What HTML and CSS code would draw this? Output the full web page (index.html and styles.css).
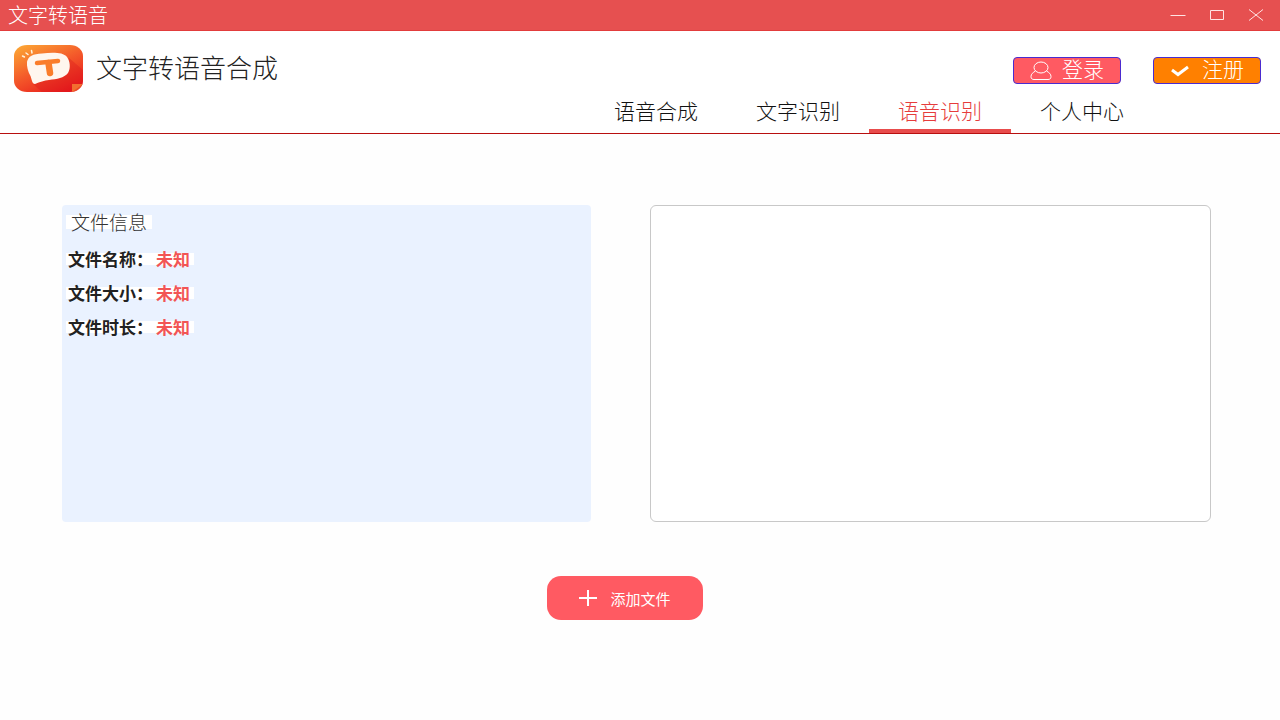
FILE: index.html
```html
<!DOCTYPE html>
<html lang="zh-CN">
<head>
    <meta charset="UTF-8">
    <meta name="viewport" content="width=device-width, initial-scale=1.0">
    <title>文字转语音</title>
    <link rel="stylesheet" href="styles.css">
</head>
<body>
    <!-- Window title bar -->
    <div class="titlebar">
        <span class="titlebar-text">文字转语音</span>
        <div class="window-controls">
            <button type="button" aria-label="最小化">
                <svg width="16" height="12" viewBox="0 0 16 12"><path d="M0.5 6.5H15.5"/></svg>
            </button>
            <button type="button" aria-label="最大化">
                <svg width="16" height="12" viewBox="0 0 16 12"><path d="M1.5 1.5H14.5V10.5H1.5Z"/></svg>
            </button>
            <button type="button" aria-label="关闭">
                <svg width="16" height="12" viewBox="0 0 16 12"><path d="M1 0.5L15 11.5M15 0.5L1 11.5"/></svg>
            </button>
        </div>
    </div>

    <header class="header">
        <div class="header-top">
            <div class="brand">
                <svg class="logo" width="69" height="47" viewBox="0 0 69 47">
                    <defs>
                        <linearGradient id="logoBg" x1="0.1" y1="0" x2="0.75" y2="1">
                            <stop offset="0" stop-color="#fca534"/>
                            <stop offset="0.5" stop-color="#f45a2a"/>
                            <stop offset="1" stop-color="#e8191c"/>
                        </linearGradient>
                        <clipPath id="logoClip"><rect width="69" height="47" rx="13" ry="11"/></clipPath>
                    </defs>
                    <g clip-path="url(#logoClip)">
                        <rect width="69" height="47" fill="url(#logoBg)"/>
                        <path d="M55 13L69 25V47H28L19 39L50 30Z" fill="#d9171c" opacity="0.35"/>
                        <path d="M58 39H69L58 47Z" fill="#f98a3c"/>
                        <path d="M58 47V39H69V47Z" fill="#f0642b" opacity="0.7"/>
                    </g>
                    <path d="M13 17C14 11 19 9 28 8.500C38 7.500 49 7 53 12C56 16 57 23 54 28C50 33 43 34 35 35C30 35.500 26 37 21 39C18 39 18 35 16.500 31C14 27 12.500 21 13 17Z" fill="#fff6ee"/>
                    <path d="M23 18L44 16" fill="none" stroke="#fa7d2b" stroke-width="4.500" stroke-linecap="round"/>
                    <path d="M34.500 18V18L36 28" fill="none" stroke="#fa7d2b" stroke-width="6.500" stroke-linecap="round"/>
                    <path d="M8.500 11L10.500 12M12 8L14 9.500M17.500 5.500L18 8" fill="none" stroke="#fff3dc" stroke-width="1.500" stroke-linecap="round"/>
                </svg>
                <h1>文字转语音合成</h1>
            </div>
            <div class="account">
                <button type="button" class="btn btn-login">
                    <svg width="22" height="20" viewBox="0 0 22 20">
                        <ellipse cx="11" cy="6.500" rx="7" ry="5.500"/>
                        <path d="M5.500 10C3 11.500 1 13 1 15.500C1 17.500 2 18.500 4 18.500H18C20 18.500 21 17.500 21 15.500C21 13 19 11.500 16.500 10"/>
                    </svg>
                    <span>登录</span>
                </button>
                <button type="button" class="btn btn-register">
                    <svg width="20" height="12" viewBox="0 0 20 12"><path d="M2 5L8 9.500L18 2"/></svg>
                    <span>注册</span>
                </button>
            </div>
        </div>
        <nav class="nav">
            <a href="#">语音合成</a>
            <a href="#">文字识别</a>
            <a href="#" class="active">语音识别</a>
            <a href="#">个人中心</a>
        </nav>
    </header>

    <main class="main">
        <div class="panels">
            <section class="file-info">
                <h2>文件信息</h2>
                <dl>
                    <div class="row"><dt>文件名称：</dt><dd>未知</dd></div>
                    <div class="row"><dt>文件大小：</dt><dd>未知</dd></div>
                    <div class="row"><dt>文件时长：</dt><dd>未知</dd></div>
                </dl>
            </section>
            <textarea class="result" aria-label="识别结果"></textarea>
        </div>
        <button type="button" class="add-file">
            <svg width="18" height="16" viewBox="0 0 18 16"><path d="M0 8H18M9 0V16"/></svg>
            添加文件
        </button>
    </main>
</body>
</html>
```

FILE: styles.css
```css
* {
    box-sizing: border-box;
}

body {
    margin: 0;
    background-color: #fefefe;
    font-family: "Noto Sans CJK SC", sans-serif;
    color: #222;
}

h1, h2, dl, dd {
    margin: 0;
}

button {
    padding: 0;
    border: none;
    font-family: inherit;
    color: white;
    cursor: pointer;
}

svg {
    flex-shrink: 0;
}

/* Title bar */
.titlebar {
    display: flex;
    justify-content: space-between;
    align-items: center;
    height: 31px;
    padding: 0 16px 0 8px;
    background-color: #e65050;
    border-bottom: 1px solid #e23c3c;
    color: white;
}

.titlebar-text {
    font-size: 20px;
    font-weight: 300;
    line-height: 28px;
}

.window-controls {
    display: flex;
    gap: 23px;
}

.window-controls button {
    display: flex;
    background: none;
}

.window-controls svg {
    fill: none;
    stroke: #ffe3e3;
    stroke-width: 1;
}

/* Header */
.header {
    border-bottom: 1px solid #b80f0f;
    background-color: white;
}

.header-top {
    display: flex;
    justify-content: space-between;
    align-items: flex-start;
    padding: 14px 19px 0 14px;
}

.brand {
    display: flex;
    gap: 13px;
}

.brand h1 {
    font-size: 26px;
    font-weight: 300;
    line-height: 44px;
}

.account {
    display: flex;
    gap: 32px;
    padding-top: 12px;
}

.btn {
    display: flex;
    justify-content: center;
    align-items: center;
    width: 108px;
    height: 27px;
    border: 1px solid #4a2bd0;
    border-radius: 4px;
    font-size: 21px;
    font-weight: 300;
    line-height: 21px;
}

.btn span {
    padding-bottom: 4px;
}

.btn svg {
    fill: none;
    stroke: white;
}

.btn-login {
    gap: 10px;
    background-color: #ff5a62;
}

.btn-register {
    gap: 12px;
    background-color: #ff8000;
}

.btn-register svg {
    stroke-width: 3;
}

.nav {
    display: flex;
    justify-content: flex-end;
    padding-right: 127px;
}

.nav a {
    width: 142px;
    height: 41px;
    padding-top: 4px;
    border-bottom: 4px solid transparent;
    font-size: 21px;
    font-weight: 300;
    line-height: 28px;
    text-align: center;
    text-decoration: none;
    color: #111;
}

.nav a.active {
    border-bottom-color: #e84c4c;
    color: #e63c3c;
}

/* Content */
.main {
    display: flex;
    flex-direction: column;
    align-items: center;
    gap: 54px;
    padding: 71px 69px 40px 62px;
}

.panels {
    display: grid;
    grid-template-columns: 529fr 561fr;
    gap: 59px;
    width: 100%;
    min-height: 317px;
}

.file-info {
    padding: 4px;
    background-color: #eaf2ff;
    border-radius: 4px;
}

.file-info h2 {
    display: table;
    padding: 0 5px;
    margin: 6px 0 24px;
    background-color: white;
    font-size: 19px;
    font-weight: 300;
    line-height: 14px;
    color: #333;
}

.row {
    display: flex;
    gap: 3px;
    width: 128px;
    padding: 0 2px;
    margin-bottom: 22px;
    background-color: white;
    font-size: 17px;
    font-weight: 700;
    line-height: 12px;
    white-space: nowrap;
}

.row dd {
    color: #f25555;
}

.result {
    width: 100%;
    height: 100%;
    padding: 8px;
    border: 1px solid #c8c8c8;
    border-radius: 6px;
    outline: none;
    resize: none;
    background-color: white;
    font-family: inherit;
    font-size: 16px;
}

.add-file {
    display: flex;
    justify-content: center;
    align-items: center;
    gap: 13px;
    width: 156px;
    height: 44px;
    margin-right: 23px;
    border-radius: 14px;
    background-color: #ff5a62;
    font-size: 15px;
}

.add-file svg {
    stroke: white;
    stroke-width: 2;
}
```
